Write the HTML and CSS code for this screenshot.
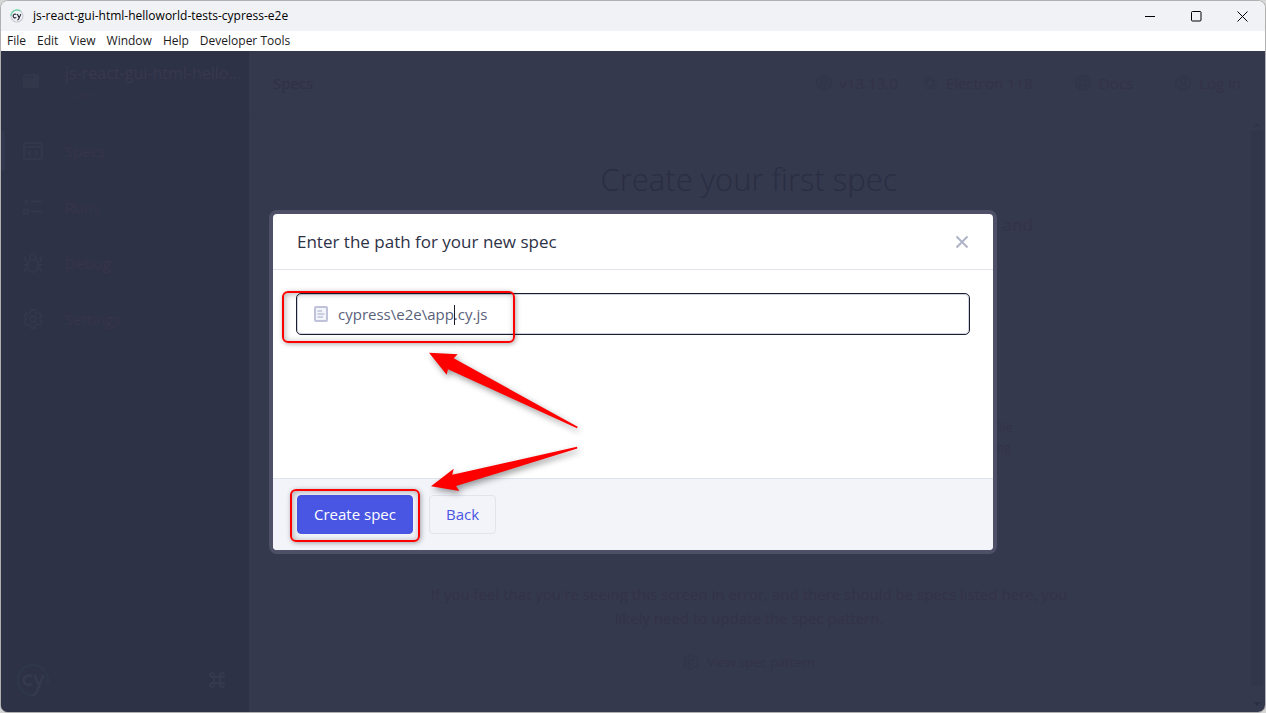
FILE: index.html
```html
<!DOCTYPE html>
<html lang="en">
<head>
<meta charset="utf-8">
<title>js-react-gui-html-helloworld-tests-cypress-e2e</title>
<link rel="stylesheet" href="styles.css">
</head>
<body>
<div class="window">
  <header class="titlebar">
    <svg class="app-icon" width="14" height="14" viewBox="0 0 14 14" fill="none">
      <circle cx="7" cy="7" r="6" stroke="#c9cdd6" stroke-width="1.2"/>
      <path d="M1 7a6 6 0 0 1 9.500-4.900" stroke="#69d3a7" stroke-width="1.2"/>
      <path d="M6.300 5.600a1.900 1.900 0 1 0 0 2.800M7.300 5.100l1.700 3.500M10.800 5.100l-2 4.800q-.4 1-1.500 1" stroke="#1b1e2e" stroke-width="1.1"/>
    </svg>
    <span class="window-title">js-react-gui-html-helloworld-tests-cypress-e2e</span>
    <div class="window-controls">
      <button aria-label="Minimize"><svg width="11" height="11" viewBox="0 0 11 11"><path d="M0 5.500h10" stroke="#000"/></svg></button>
      <button aria-label="Maximize"><svg width="11" height="11" viewBox="0 0 11 11"><rect x=".5" y=".5" width="9.500" height="9.500" rx="1" fill="none" stroke="#000"/></svg></button>
      <button aria-label="Close window"><svg width="11" height="11" viewBox="0 0 11 11"><path d="M.5.5l10 10M10.500.5l-10 10" stroke="#000"/></svg></button>
    </div>
  </header>
  <nav class="menubar">
    <button>File</button><button>Edit</button><button>View</button><button>Window</button><button>Help</button><button>Developer Tools</button>
  </nav>
  <div class="app">
    <aside class="sidebar">
      <div class="project">
        <svg width="16" height="14" viewBox="0 0 16 14"><rect width="16" height="14" rx="2" fill="#33374a"/><path d="M2.500 3h1.500M5.500 3h1.500M8.500 3h1.500" stroke="#2b2f44" stroke-width="1.500"/></svg>
        <div class="project-text">
          <div class="project-name">js-react-gui-html-helloworld-tests</div>
          <div class="branch">main</div>
        </div>
      </div>
      <nav class="side-nav">
        <a href="#" class="side-link active">
          <svg class="side-icon" width="20" height="20" viewBox="0 0 20 20"><rect x="1" y="2" width="18" height="16" rx="1.500"/><path d="M1 6h18M8 9.500L5.500 12 8 14.500M12 9.500l2.500 2.500-2.500 2.500"/></svg>
          <span>Specs</span></a>
        <a href="#" class="side-link">
          <svg class="side-icon" width="20" height="20" viewBox="0 0 20 20"><path d="M1 2.500l4 4M5 2.500l-4 4M8 4.500h12M8 14.500h12"/><rect x="1" y="12.500" width="4" height="4"/></svg>
          <span>Runs</span></a>
        <a href="#" class="side-link">
          <svg class="side-icon" width="20" height="20" viewBox="0 0 20 20"><path d="M5 12a5 5 0 0 1 10 0v2a5 5 0 0 1-10 0zM7 7V4a3 3 0 0 1 6 0v3M5 9L2 7V4M15 9l3-2V4M5 12H1M15 12h4M6 15l-4 1v3M14 15l4 1v3"/></svg>
          <span>Debug</span></a>
        <a href="#" class="side-link">
          <svg class="side-icon" width="20" height="20" viewBox="0 0 20 20"><path d="M8 1h4l.7 2.600 1.700 1 2.600-.7 2 3.400-1.900 1.800v1.800L19 12.700l-2 3.400-2.600-.7-1.700 1L12 19H8l-.7-2.600-1.700-1-2.600.7-2-3.400 1.900-1.800V9.100L1 7.300l2-3.400 2.600.7 1.700-1z"/><circle cx="10" cy="10" r="3"/></svg>
          <span>Settings</span></a>
      </nav>
      <div class="side-foot">
        <svg width="32" height="32" viewBox="0 0 32 32" fill="none" stroke="#353b4f" stroke-width="2">
          <path d="M18 31A15 15 0 1 1 30.500 20" stroke="#2e384b"/>
          <path d="M15 13a4.800 4.800 0 1 0 0 6.400M17.500 11l4 9.500M26.500 11l-6 15q-1.500 5-5 5" stroke-width="2.500"/>
        </svg>
        <svg width="16" height="16" viewBox="0 0 16 16" fill="none" stroke="#34394e" stroke-width="2"><path d="M5 5h6v6H5zM5 5H3a2 2 0 1 1 2-2zM11 5V3a2 2 0 1 1 2 2zM5 11v2a2 2 0 1 1-2-2zM11 11h2a2 2 0 1 1-2 2z"/></svg>
      </div>
    </aside>
    <main class="main">
      <header class="topbar">
        <h1 class="page-title">Specs</h1>
        <div class="top-links">
          <a href="#" class="top-link"><svg class="top-icon" width="16" height="16" viewBox="0 0 16 16"><circle cx="8" cy="8" r="7"/><path d="M5 13V8a3 3 0 1 1 3 3M8 8v5"/></svg>v13.13.0</a>
          <a href="#" class="top-link chevron"><svg class="top-icon thin" width="16" height="16" viewBox="0 0 16 16"><ellipse cx="8" cy="8" rx="7" ry="3"/><ellipse cx="8" cy="8" rx="7" ry="3" transform="rotate(60 8 8)"/><ellipse cx="8" cy="8" rx="7" ry="3" transform="rotate(120 8 8)"/></svg>Electron 118</a>
          <a href="#" class="top-link chevron"><svg class="top-icon" width="16" height="16" viewBox="0 0 16 16"><circle cx="8" cy="8" r="7"/><circle cx="8" cy="8" r="3"/><path d="M3 3l3 3M13 3l-3 3M3 13l3-3M13 13l-3-3"/></svg>Docs</a>
          <a href="#" class="top-link"><svg class="top-icon" width="16" height="16" viewBox="0 0 16 16"><circle cx="8" cy="8" r="7"/><circle cx="8" cy="6" r="2.500"/><path d="M3 12q5-4 10 0"/></svg>Log in</a>
        </div>
      </header>
      <div class="scroller">
        <section class="content">
          <h2 class="headline">Create your first spec</h2>
          <p class="intro">Since this project looks new, we recommend that you use the specs and tests that we've created for you to get started.</p>
          <div class="cards">
            <div class="card"><p>We'll generate several example specs to help guide you.</p></div>
            <div class="card"><p>We'll generate a template spec file which can be used to start testing your application.</p></div>
          </div>
          <p class="hint">If you feel that you're seeing this screen in error, and there should be specs listed here, you likely need to update the spec pattern.</p>
          <button class="pattern"><svg class="top-icon" width="16" height="16" viewBox="0 0 20 20"><path d="M8 1h4l.7 2.600 1.700 1 2.600-.7 2 3.400-1.900 1.800v1.800L19 12.700l-2 3.400-2.600-.7-1.700 1L12 19H8l-.7-2.600-1.700-1-2.600.7-2-3.400 1.900-1.800V9.100L1 7.300l2-3.400 2.600.7 1.700-1z"/><circle cx="10" cy="10" r="3"/></svg>View spec pattern</button>
        </section>
        <div class="scrollbar">
          <svg width="8" height="4" viewBox="0 0 8 4"><path d="M0 4l4-4 4 4z" fill="#303448"/></svg>
          <div class="thumb"></div>
          <svg width="8" height="4" viewBox="0 0 8 4"><path d="M0 0l4 4 4-4z" fill="#2c3044"/></svg>
        </div>
      </div>
    </main>
    <div class="overlay">
      <div class="modal" role="dialog" aria-labelledby="dialog-title">
        <header class="modal-head">
          <h2 class="modal-title" id="dialog-title"><label for="spec-path">Enter the path for your new spec</label></h2>
          <button class="close" aria-label="Close"><svg width="14" height="14" viewBox="0 0 14 14"><path d="M1.500 1.500l11 11M12.500 1.500l-11 11" stroke="#afb3c7" stroke-width="2"/></svg></button>
        </header>
        <div class="modal-body">
          <div class="field">
            <svg width="14" height="16" viewBox="0 0 14 16" fill="none"><rect x="1" y="1" width="12" height="14" rx="1" fill="#f3f4fa" stroke="#bfc2d9" stroke-width="2"/><path d="M3.500 5H8M3.500 8h7M3.500 11H9" stroke="#bfc2d9" stroke-width="1.600"/></svg>
            <input id="spec-path" type="text" value="cypress\e2e\app.cy.js" spellcheck="false">
            <span class="caret"></span>
          </div>
        </div>
        <footer class="modal-foot">
          <button class="btn primary">Create spec</button>
          <button class="btn">Back</button>
        </footer>
        <div class="mark mark-path"></div>
        <div class="mark mark-create"></div>
        <svg class="arrows" width="170" height="160" viewBox="420 340 170 160" fill="#f00">
          <path d="M429 352.700L457.700 354.300 453.700 358.300 577.700 426.800 577 428.300 448 369.300 446.700 374.700z"/>
          <path d="M431 486.300L453.700 468.700 452.300 474.700 577 446.800 577.300 448.600 456 486 459.300 491z"/>
        </svg>
      </div>
    </div>
  </div>
</div>
</body>
</html>
```
FILE: styles.css
```css
* { box-sizing: border-box; }
body {
  margin: 0;
  background: #d6d6d6;
  font-family: "Open Sans", "Noto Sans", sans-serif;
  font-size: 15px;
  line-height: 24px;
}
h1, h2, p { margin: 0; font-weight: 400; }
button { font: inherit; color: inherit; background: none; border: 0; padding: 0; }
a { color: inherit; text-decoration: none; }

.window {
  display: flex;
  flex-direction: column;
  min-height: 100vh;
  border: 1px solid #b0b0b0;
  border-radius: 8px;
  overflow: hidden;
  background: #fff;
}
.titlebar {
  display: flex;
  align-items: center;
  height: 30px;
  padding-left: 9px;
  background: #f1f2f5;
  color: #000;
  font-size: 12px;
}
.window-title { flex: 1; margin-left: 9px; }
.window-controls { display: flex; }
.window-controls button { display: grid; place-items: center; width: 46px; height: 30px; }
.menubar {
  display: flex;
  gap: 11px;
  height: 20px;
  padding-left: 6px;
  color: #1a1a1a;
  font-size: 12px;
  line-height: 20px;
}

.app { position: relative; display: flex; flex: 1; background: #35394d; color: #33324a; }
.sidebar {
  display: flex;
  flex-direction: column;
  width: 248px;
  background: #2e3247;
  color: #37344b;
}
.project { display: flex; gap: 26px; padding: 11px 8px 0 22px; height: 72px; }
.project svg { flex: none; margin-top: 12px; }
.project-text { min-width: 0; line-height: 22px; }
.project-name { overflow: hidden; text-overflow: ellipsis; white-space: nowrap; font-size: 16px; color: #39384e; }
.branch { font-size: 14px; color: #333349; }
.side-nav { display: flex; flex-direction: column; gap: 16px; padding-top: 8px; }
.side-link { display: flex; align-items: center; gap: 22px; height: 40px; padding-left: 18px; border-left: 4px solid transparent; }
.side-link.active { border-left-color: #32374d; }
.side-icon { fill: none; stroke: #32374c; stroke-width: 2; }
.side-foot { display: flex; align-items: center; justify-content: space-between; margin-top: auto; padding: 0 24px 16px 16px; }

.main { display: flex; flex: 1; flex-direction: column; min-width: 0; }
.topbar {
  display: flex;
  align-items: center;
  justify-content: space-between;
  height: 64px;
  padding: 0 24px;
  border-bottom: 1px solid #34384c;
}
.page-title { font-size: 15px; color: #303046; }
.top-links { display: flex; gap: 24px; }
.top-link { display: flex; align-items: center; gap: 8px; font-weight: 500; }
.top-link.chevron { padding-right: 18px; }
.top-icon { fill: none; stroke: #31364a; stroke-width: 2; }
.top-icon.thin { stroke-width: 1; }

.scroller { display: flex; flex: 1; }
.content {
  display: flex;
  flex: 1;
  flex-direction: column;
  align-items: center;
  padding: 40px 24px 24px;
  text-align: center;
}
.headline { font-size: 31px; font-weight: 300; line-height: 48px; color: #2a2e43; }
.intro { width: 592px; margin-top: 10px; font-size: 17px; }
.cards { display: grid; grid-template-columns: 1fr 1fr; gap: 24px; width: 616px; margin-top: 24px; }
.card { display: flex; align-items: flex-end; justify-content: center; height: 225px; padding: 32px; border: 1px solid #34384c; border-radius: 4px; font-size: 13px; line-height: 20px; }
.hint { max-width: 660px; margin-top: 72px; }
.pattern { display: flex; align-items: center; gap: 8px; height: 32px; margin-top: 16px; padding: 0 12px; border: 1px solid #34384c; border-radius: 4px; font-size: 13px; font-weight: 500; }
.scrollbar { display: flex; flex-direction: column; align-items: center; gap: 4px; width: 16px; padding: 8px 0 6px; }
.thumb { flex: 1; width: 12px; margin-bottom: 12px; background: #32364a; }

.overlay { position: absolute; inset: 0; display: grid; place-items: center; padding: 1px 24px 0; }
.modal {
  position: relative;
  width: 100%;
  max-width: 720px;
  border-radius: 4px;
  background: #fff;
  box-shadow: 0 0 0 4px #4d5067;
}
.modal-head { display: flex; align-items: center; justify-content: space-between; height: 56px; padding: 0 24px; border-bottom: 1px solid #e1e3ed; }
.modal-title { font-size: 17px; color: #2e3247; }
.close { display: grid; place-items: center; }
.modal-body { min-height: 208px; padding: 24px; }
.field {
  position: relative;
  display: flex;
  align-items: center;
  gap: 10px;
  height: 40px;
  padding: 0 16px;
  border: 1px solid #d0d2e0;
  border-radius: 4px;
  outline: 1px solid #1b1e2e;
}
.field svg { flex: none; }
.field input { flex: 1; min-width: 0; padding: 0; border: 0; outline: 0; background: none; font: inherit; color: #5a5f7a; }
.caret { position: absolute; left: 156px; top: 10px; width: 1px; height: 20px; background: #1b1e2e; }
.modal-foot { display: flex; gap: 16px; padding: 16px 24px; border-top: 1px solid #e1e3ed; border-radius: 0 0 4px 4px; background: #f3f4fa; }
.btn { height: 39px; padding: 0 16px 2px; border: 1px solid #e1e3ed; border-radius: 4px; color: #4956e3; }
.btn.primary { border-color: #4956e3; background: #4956e3; color: #fff; }

.mark { position: absolute; border: 2px solid #f00; border-radius: 6px; box-shadow: 1px 1px 5px rgba(0, 0, 0, .35), inset 1px 1px 6px rgba(0, 0, 0, .3); }
.mark-path { left: 9px; top: 77px; width: 233px; height: 52px; }
.mark-create { left: 17px; top: 275px; width: 130px; height: 53px; }
.arrows { position: absolute; left: 147px; top: 126px; filter: drop-shadow(2px 3px 3px rgba(0, 0, 0, .4)); }
```
